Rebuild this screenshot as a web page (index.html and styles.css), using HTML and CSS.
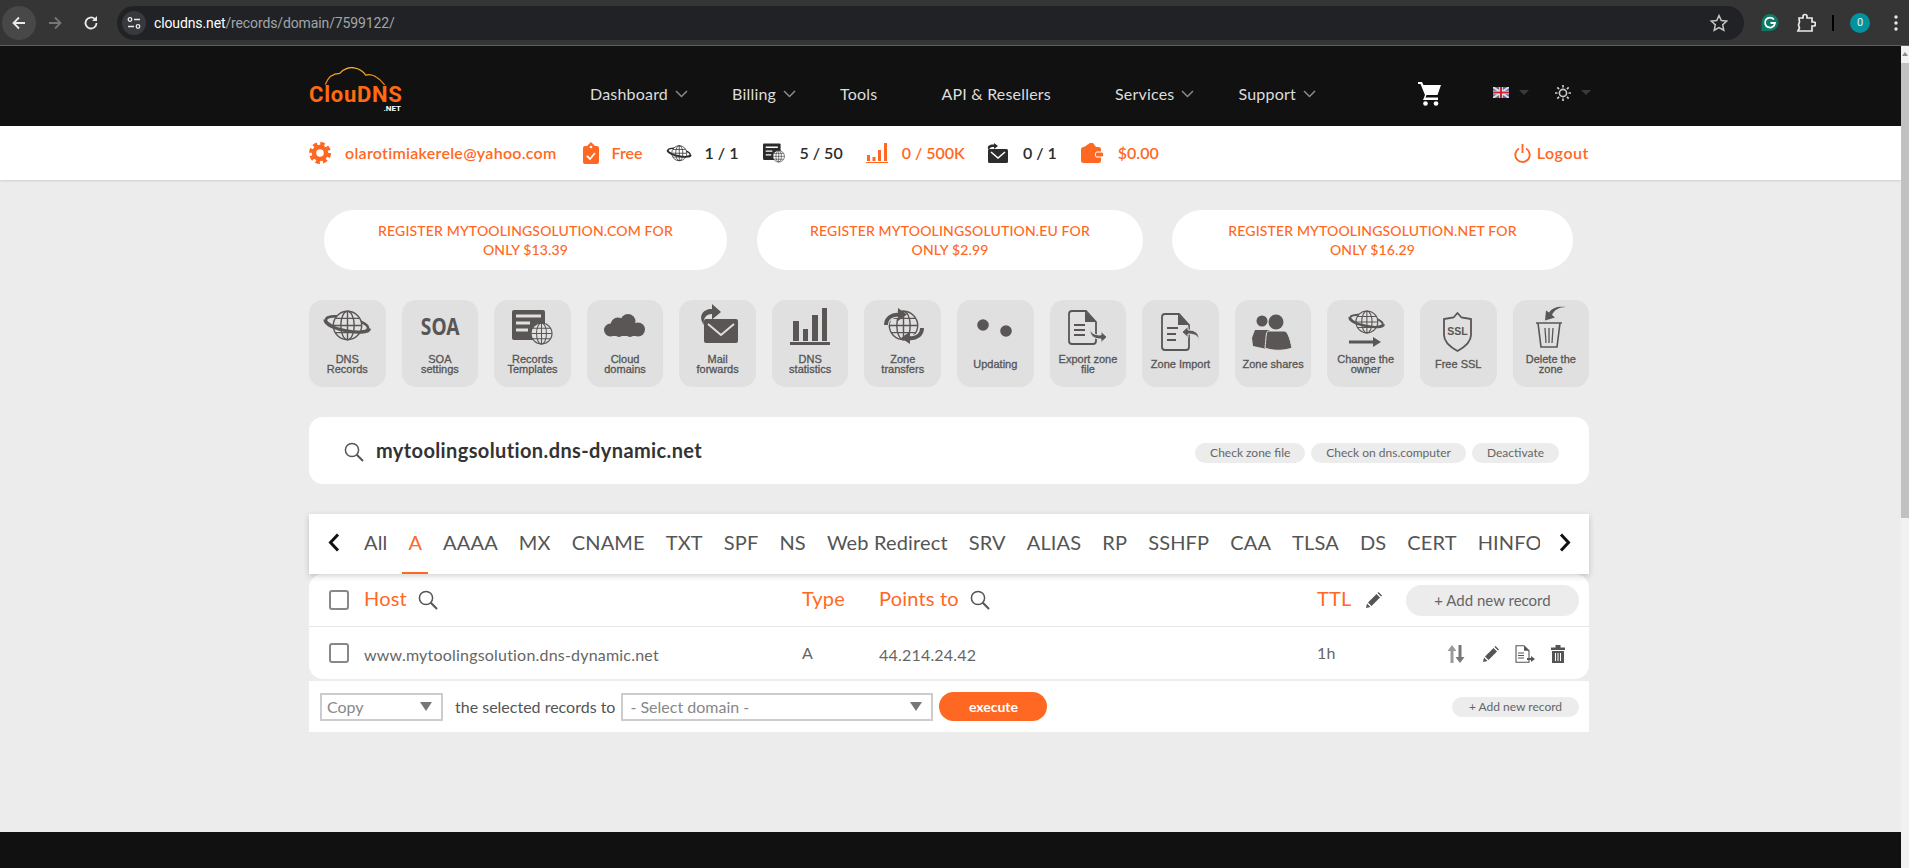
FILE: index.html
```html
<!DOCTYPE html>
<html lang="en">
<head>
<meta charset="utf-8">
<title>ClouDNS records</title>
<link rel="stylesheet" href="styles.css">
</head>
<body>
<svg class="sprite" width="0" height="0" aria-hidden="true">
  <defs>
    <symbol id="globe" viewBox="0 0 24 24">
      <g fill="none" stroke="currentColor" stroke-width="1.1">
        <circle cx="12" cy="12" r="11" class="globe-fill"/>
        <ellipse cx="12" cy="12" rx="5.2" ry="11"/>
        <path d="M12 1v22M1 12h22M3 6.5h18M3 17.5h18"/>
      </g>
    </symbol>
    <symbol id="planet" viewBox="0 0 48 32">
      <g fill="none" stroke="currentColor">
        <ellipse cx="24" cy="14" rx="21.5" ry="6.5" stroke-width="2.6" transform="rotate(12 24 14)"/>
      </g>
      <use href="#globe" x="9" y="0" width="31" height="31"/>
      <path d="M2 9.5C2 14 10 18 22 20.5C34 23 46 23 46.5 18.5" fill="none" stroke="currentColor" stroke-width="3.2"/>
    </symbol>
    <symbol id="magnifier" viewBox="0 0 20 20">
      <circle cx="8" cy="8" r="6.6" fill="none" stroke="currentColor" stroke-width="1.5"/>
      <path d="M12.8 12.8L19 19" stroke="currentColor" stroke-width="2" fill="none"/>
    </symbol>
    <symbol id="pencil" viewBox="0 0 16 16">
      <path d="M0 16l1-4.500 3.500 3.500zM2 10.500L10.500 2 14 5.500 5.500 14zM11.500 1l1-1 3.500 3.500-1 1z" fill="currentColor"/>
    </symbol>
  </defs>
</svg>

<div class="chrome">
  <div class="nav-btn nav-btn-active">
    <svg width="16" height="16" viewBox="0 0 16 16"><path d="M14 8H3M8 2.500L2.500 8 8 13.500" fill="none" stroke="#e8eaed" stroke-width="1.800"/></svg>
  </div>
  <div class="nav-btn">
    <svg width="16" height="16" viewBox="0 0 16 16"><path d="M2 8h11M8 2.500L13.500 8 8 13.500" fill="none" stroke="#75777a" stroke-width="1.800"/></svg>
  </div>
  <div class="nav-btn">
    <svg width="16" height="16" viewBox="0 0 16 16"><path d="M13.500 8A5.500 5.500 0 1 1 11.800 4" fill="none" stroke="#e8eaed" stroke-width="1.800"/><path d="M14 1v5H9z" fill="#e8eaed"/></svg>
  </div>
  <div class="address">
    <div class="site-btn">
      <svg width="14" height="14" viewBox="0 0 14 14"><g fill="none" stroke="#e8eaed" stroke-width="1.300"><circle cx="3" cy="3.500" r="1.800"/><path d="M7 3.500h6M1 10.500h6"/><circle cx="11" cy="10.500" r="1.800"/></g></svg>
    </div>
    <div class="url"><span class="url-host">cloudns.net</span>/records/domain/7599122/</div>
    <svg class="star" width="20" height="20" viewBox="0 0 20 20"><path d="M10 2.500l2.300 5 5.400.6-4 3.700 1.100 5.400L10 14.500l-4.800 2.700 1.100-5.400-4-3.700 5.400-.6z" fill="none" stroke="#c4c7c5" stroke-width="1.500"/></svg>
  </div>
  <div class="ext-icons">
    <svg width="20" height="20" viewBox="0 0 20 20"><path d="M10 1a8.500 8.500 0 0 1 8.500 8.500A8.500 8.500 0 0 1 10 18H1.500V9.500A8.500 8.500 0 0 1 10 1z" fill="#0c7a66"/><path d="M14 6.500A5 5 0 1 0 15 10h-4.500" fill="none" stroke="#fff" stroke-width="1.800"/></svg>
    <svg width="20" height="20" viewBox="0 0 20 20"><path d="M3 5h4V3.500a2 2 0 0 1 4 0V5h5v4h1.500a2 2 0 0 1 0 4H16v5H2l1.500-3-1-3 1-3z" fill="none" stroke="#e8eaed" stroke-width="1.700"/></svg>
    <div class="ext-divider"></div>
    <div class="avatar">0</div>
    <svg width="20" height="20" viewBox="0 0 20 20"><g fill="#e8eaed"><circle cx="10" cy="4" r="1.700"/><circle cx="10" cy="10" r="1.700"/><circle cx="10" cy="16" r="1.700"/></g></svg>
  </div>
</div>

<div class="viewport">
  <div class="page">
    <header class="header">
      <div class="logo">
        <svg width="92" height="18" viewBox="0 0 92 20"><defs><linearGradient id="arc" x1="0" y1="1" x2="0" y2="0"><stop offset="0" stop-color="#e8791a"/><stop offset="1" stop-color="#f6b52c"/></linearGradient></defs><path d="M13 19.500C16 11 22 7 29 7C33 2 40 0 45 1C51 2 55 5 58 9C64 7 72 11 79 20" fill="none" stroke="url(#arc)" stroke-width="1.500"/></svg>
        <div class="logo-name">ClouDNS</div>
        <div class="logo-tld">.NET</div>
      </div>
      <div class="header-main">
        <nav class="menu">
          <a class="menu-item">Dashboard<svg class="chev" width="13" height="8" viewBox="0 0 13 8"><path d="M1 1l5.500 5.500L12 1" fill="none" stroke="#8a8a8a" stroke-width="1.500"/></svg></a>
          <a class="menu-item">Billing<svg class="chev" width="13" height="8" viewBox="0 0 13 8"><path d="M1 1l5.500 5.500L12 1" fill="none" stroke="#8a8a8a" stroke-width="1.500"/></svg></a>
          <a class="menu-item">Tools</a>
          <a class="menu-item menu-item-api">API &amp; Resellers</a>
          <a class="menu-item">Services<svg class="chev" width="13" height="8" viewBox="0 0 13 8"><path d="M1 1l5.500 5.500L12 1" fill="none" stroke="#8a8a8a" stroke-width="1.500"/></svg></a>
          <a class="menu-item">Support<svg class="chev" width="13" height="8" viewBox="0 0 13 8"><path d="M1 1l5.500 5.500L12 1" fill="none" stroke="#8a8a8a" stroke-width="1.500"/></svg></a>
        </nav>
        <svg class="cart" width="23" height="24" viewBox="0 0 23 24"><path d="M0 0h4l1.500 3H23l-3.500 10H8.500l-1 2.500H20v2.500H5l2-5L2.500 2H0z" fill="#fff"/><circle cx="7.500" cy="21.500" r="2.300" fill="#fff"/><circle cx="18" cy="21.500" r="2.300" fill="#fff"/></svg>
        <div class="lang">
          <svg width="16" height="11" viewBox="0 0 16 11"><rect width="16" height="11" fill="#5a64a8"/><path d="M0 0l16 11M16 0L0 11" stroke="#ddd" stroke-width="2"/><path d="M8 0v11M0 5.500h16" stroke="#eee" stroke-width="3.500"/><path d="M8 0v11M0 5.500h16" stroke="#d2232a" stroke-width="2"/></svg>
          <i class="hdr-caret"></i>
        </div>
        <div class="theme">
          <svg width="16" height="16" viewBox="0 0 16 16"><circle cx="8" cy="8" r="3.600" fill="none" stroke="#ccc" stroke-width="1.600"/><path d="M8 0v2.500M8 13.500V16M0 8h2.500M13.500 8H16M2.300 2.300l1.800 1.800M11.900 11.900l1.800 1.800M13.700 2.300l-1.800 1.800M4.100 11.900l-1.800 1.800" stroke="#ccc" stroke-width="1.700"/></svg>
          <i class="hdr-caret"></i>
        </div>
      </div>
    </header>

    <div class="userbar">
      <div class="stat stat-email orange">
        <svg width="22" height="22" viewBox="0 0 22 22"><circle cx="11" cy="11" r="6" fill="none" stroke="currentColor" stroke-width="4.500"/><circle cx="11" cy="11" r="9.300" fill="none" stroke="currentColor" stroke-width="3.400" stroke-dasharray="4.300 3"/></svg>
        <span>olarotimiakerele@yahoo.com</span>
      </div>
      <div class="stat stat-plan orange">
        <svg width="16" height="22" viewBox="0 0 16 22"><path d="M8 0l4 4h2a2 2 0 0 1 2 2v14a2 2 0 0 1-2 2H2a2 2 0 0 1-2-2V6a2 2 0 0 1 2-2h2z" fill="currentColor"/><circle cx="8" cy="5" r="1.300" fill="#fff"/><path d="M4 14l3 3 5-6" fill="none" stroke="#fff" stroke-width="1.800"/></svg>
        <span>Free</span>
      </div>
      <div class="stat stat-zones dark">
        <svg class="stat-planet" width="26" height="17" viewBox="0 0 48 32"><use href="#planet"/></svg>
        <span>1 / 1</span>
      </div>
      <div class="stat stat-records dark">
        <svg class="stat-planet" width="22" height="20" viewBox="0 0 40 35"><rect width="32" height="30" rx="2" fill="currentColor"/><path d="M5 7h22M5 14h12M5 21h10" stroke="#fff" stroke-width="2.500"/><use href="#globe" x="17" y="12" width="23" height="23"/></svg>
        <span>5 / 50</span>
      </div>
      <div class="stat stat-hits orange">
        <svg width="22" height="20" viewBox="0 0 22 20"><path d="M1 12h3v6H1zM6.500 14h3v4h-3zM12 7h3v11h-3zM18 0h3v18h-3zM0 19h22v1.500H0z" fill="currentColor"/></svg>
        <span>0 / 500K</span>
      </div>
      <div class="stat stat-mail dark">
        <svg width="22" height="20" viewBox="0 0 22 20"><rect x="2" y="6" width="20" height="14" rx="1.500" fill="currentColor"/><path d="M5 9l7 6 7-6" fill="none" stroke="#fff" stroke-width="1.500"/><path d="M3 7C0 4 3 1 8 1.500V0l4 3-4 3V4C5 3.500 3 5 3 7z" fill="currentColor"/></svg>
        <span>0 / 1</span>
      </div>
      <div class="stat stat-wallet orange">
        <svg width="23" height="20" viewBox="0 0 23 20"><path d="M3 4L9 0h3l3 4z" fill="currentColor"/><rect y="4" width="20" height="16" rx="2.500" fill="currentColor"/><rect x="14.500" y="9" width="8" height="5" rx="1.500" fill="currentColor" stroke="#fff" stroke-width="1"/></svg>
        <span>$0.00</span>
      </div>
      <div class="stat stat-logout orange">
        <svg width="17" height="19" viewBox="0 0 17 19"><path d="M5 4.500a7.200 7.200 0 1 0 7 0M8.500 0v9" fill="none" stroke="currentColor" stroke-width="1.900"/></svg>
        <span>Logout</span>
      </div>
    </div>

    <main class="main">
      <section class="promos">
        <a class="promo promo-com">REGISTER MYTOOLINGSOLUTION.COM FOR<br>ONLY $13.39</a>
        <a class="promo promo-eu">REGISTER MYTOOLINGSOLUTION.EU FOR<br>ONLY $2.99</a>
        <a class="promo promo-net">REGISTER MYTOOLINGSOLUTION.NET FOR<br>ONLY $16.29</a>
      </section>

      <section class="tiles">
        <a class="tile">
          <svg class="tile-icon" viewBox="0 0 76 52"><use href="#planet" x="14" y="6" width="48" height="32"/></svg>
          <span class="tile-label">DNS<br>Records</span>
        </a>
        <a class="tile">
          <div class="tile-icon soa"><span>SOA</span></div>
          <span class="tile-label">SOA<br>settings</span>
        </a>
        <a class="tile">
          <svg class="tile-icon" viewBox="0 0 76 52"><rect x="18" y="6" width="33" height="30" rx="2" fill="currentColor"/><path d="M22 12h25M22 19h14M22 26h12" stroke="#e0e0e0" stroke-width="3"/><use href="#globe" x="36" y="18" width="23" height="23"/></svg>
          <span class="tile-label">Records<br>Templates</span>
        </a>
        <a class="tile">
          <svg class="tile-icon" viewBox="0 0 76 52"><g fill="currentColor"><circle cx="23.500" cy="26" r="6.500"/><circle cx="31" cy="21" r="7.500"/><circle cx="41" cy="17.500" r="7.500"/><circle cx="51" cy="25.500" r="7"/><circle cx="32" cy="28" r="5"/><circle cx="43" cy="28" r="5"/><rect x="23" y="22" width="29" height="10"/></g></svg>
          <span class="tile-label">Cloud<br>domains</span>
        </a>
        <a class="tile">
          <svg class="tile-icon" viewBox="0 0 76 52"><rect x="24" y="15" width="34" height="24" rx="2" fill="currentColor"/><path d="M28 20l13 11 13-11" fill="none" stroke="#e0e0e0" stroke-width="2"/><path d="M24 21C18 13 22 5 32 5V0l9 8-9 7.500V10C26 10 23 14 24 21z" fill="currentColor"/></svg>
          <span class="tile-label">Mail<br>forwards</span>
        </a>
        <a class="tile">
          <svg class="tile-icon" viewBox="0 0 76 52"><path d="M21 17h6v20h-6zM31 25h5v12h-5zM40 11h6v26h-6zM50 4h5v33h-5zM18 38h40v3H18z" fill="currentColor"/></svg>
          <span class="tile-label">DNS<br>statistics</span>
        </a>
        <a class="tile">
          <svg class="tile-icon" viewBox="0 0 76 52"><use href="#globe" x="23" y="6" width="31" height="31"/><path d="M21 21C21 14 27 10 34 11" fill="none" stroke="#e0e0e0" stroke-width="6"/><path d="M21 21C21 14 27 10 34 11" fill="none" stroke="currentColor" stroke-width="4"/><path d="M33 4l9 6.500-9 6.500z" fill="currentColor"/><path d="M57 24C57 31 51 35 44 34" fill="none" stroke="#e0e0e0" stroke-width="6"/><path d="M57 24C57 31 51 35 44 34" fill="none" stroke="currentColor" stroke-width="4"/><path d="M45 27.500l-9 6.500 9 6z" fill="currentColor"/></svg>
          <span class="tile-label">Zone<br>transfers</span>
        </a>
        <a class="tile">
          <svg class="tile-icon" viewBox="0 0 76 52"><circle cx="26" cy="21" r="5.800" fill="currentColor"/><circle cx="49" cy="27" r="5.800" fill="currentColor"/></svg>
          <span class="tile-label">Updating</span>
        </a>
        <a class="tile">
          <svg class="tile-icon" viewBox="0 0 76 52"><path d="M22 7h14l10 11v19a3 3 0 0 1-3 3H22a3 3 0 0 1-3-3V10a3 3 0 0 1 3-3z" fill="none" stroke="currentColor" stroke-width="1.800"/><path d="M35 7l11 11H35z" fill="currentColor"/><path d="M24 21h11M24 26h11M24 31h11" stroke="currentColor" stroke-width="1.800"/><path d="M40 23c0 6 4 8 11 8v-3.500l6 5.500-6 5.500V35C44 35 39 32 40 23z" fill="currentColor" stroke="#e0e0e0" stroke-width="1"/></svg>
          <span class="tile-label">Export zone<br>file</span>
        </a>
        <a class="tile">
          <svg class="tile-icon" viewBox="0 0 76 52"><path d="M23 10h14l10 11v22a3 3 0 0 1-3 3H23a3 3 0 0 1-3-3V13a3 3 0 0 1 3-3z" fill="none" stroke="currentColor" stroke-width="1.800"/><path d="M36 10l11 11H36z" fill="currentColor"/><path d="M25 24h11M25 30h9M25 36h9" stroke="currentColor" stroke-width="1.800"/><path d="M57 38c0-6-4-8-11-8v3.500L40 28l6-5.500V26C53 26 58 29 57 38z" fill="currentColor" stroke="#e0e0e0" stroke-width="1"/></svg>
          <span class="tile-label">Zone Import</span>
        </a>
        <a class="tile">
          <svg class="tile-icon" viewBox="0 0 76 52"><g fill="currentColor"><circle cx="27" cy="17" r="5.500"/><path d="M20 26h14l3 5-5 14-14-3-1-8z"/><circle cx="41" cy="18" r="7.500"/><path d="M33 27h16c4 0 6 8 8 17-8 3-20 3-27 0 1-9 1-17 3-17z" stroke="#e0e0e0" stroke-width="1"/></g></svg>
          <span class="tile-label">Zone shares</span>
        </a>
        <a class="tile">
          <svg class="tile-icon" viewBox="0 0 76 52"><use href="#planet" x="20" y="6" width="37" height="24.700"/><path d="M21 36.500h24V33l8 5-8 5v-3.500H21z" fill="currentColor"/></svg>
          <span class="tile-label">Change the<br>owner</span>
        </a>
        <a class="tile">
          <svg class="tile-icon" viewBox="0 0 76 52"><path d="M37.500 9l4 4.500 9.500 1.500v16c0 8-8 13-13.500 16C32 44 24 39 24 31V15l9.500-1.500z" fill="none" stroke="currentColor" stroke-width="1.800"/><text x="37.500" y="31" class="ssl-text">SSL</text></svg>
          <span class="tile-label">Free SSL</span>
        </a>
        <a class="tile">
          <svg class="tile-icon" viewBox="0 0 76 52"><path d="M23 19h26M25 19l3 24h16l3-24" fill="none" stroke="currentColor" stroke-width="1.600"/><path d="M32 24l1 15M36 24v15M40 24l-1 15" stroke="currentColor" stroke-width="1.300"/><path d="M53 3C46 3 41 6 39 11l3 2.500-10 3 1-10 3 2C39 4 45 2 53 3z" fill="currentColor"/></svg>
          <span class="tile-label">Delete the<br>zone</span>
        </a>
      </section>

      <section class="zone-bar">
        <div class="zone-name">
          <svg width="20" height="20"><use href="#magnifier"/></svg>
          <strong>mytoolingsolution.dns-dynamic.net</strong>
        </div>
        <div class="zone-actions">
          <a class="chip">Check zone file</a>
          <a class="chip">Check on dns.computer</a>
          <a class="chip">Deactivate</a>
        </div>
      </section>

      <section class="tabs">
        <svg class="tab-arrow" width="12" height="19" viewBox="0 0 12 19"><path d="M10 1.500L2.500 9.500l7.500 8" fill="none" stroke="#111" stroke-width="3"/></svg>
        <div class="tab-list">
          <a class="tab">All</a><a class="tab tab-active">A</a><a class="tab">AAAA</a><a class="tab">MX</a><a class="tab">CNAME</a><a class="tab">TXT</a><a class="tab">SPF</a><a class="tab">NS</a><a class="tab">Web Redirect</a><a class="tab">SRV</a><a class="tab">ALIAS</a><a class="tab">RP</a><a class="tab">SSHFP</a><a class="tab">CAA</a><a class="tab">TLSA</a><a class="tab">DS</a><a class="tab">CERT</a><a class="tab">HINFO</a>
        </div>
        <svg class="tab-arrow" width="12" height="19" viewBox="0 0 12 19"><path d="M2 1.500l7.500 8-7.500 8" fill="none" stroke="#111" stroke-width="3"/></svg>
      </section>

      <section class="records">
        <div class="rec-row rec-head">
          <span class="check"></span>
          <div class="rec-cell"><span class="col-title">Host</span><svg class="mag" width="20" height="20"><use href="#magnifier"/></svg></div>
          <div class="rec-cell"><span class="col-title">Type</span></div>
          <div class="rec-cell"><span class="col-title">Points to</span><svg class="mag" width="20" height="20"><use href="#magnifier"/></svg></div>
          <div class="rec-cell rec-ttl">
            <span class="col-title">TTL</span><svg class="pen" width="16" height="16"><use href="#pencil"/></svg>
            <a class="add-btn">+ Add new record</a>
          </div>
        </div>
        <div class="rec-row rec-body">
          <span class="check"></span>
          <div class="rec-cell">www.mytoolingsolution.dns-dynamic.net</div>
          <div class="rec-cell rec-raised">A</div>
          <div class="rec-cell">44.214.24.42</div>
          <div class="rec-cell rec-ttl">
            <span class="rec-raised">1h</span>
            <div class="row-icons">
              <svg class="icon-sort" width="18" height="18" viewBox="0 0 18 18"><path d="M5 0l4.500 6H6.500v12h-3V6H.5z" fill="#9a9a9a"/><path d="M13 18l-4.500-6h3V0h3v12h3z" fill="#777"/></svg>
              <svg width="16" height="16"><use href="#pencil"/></svg>
              <svg width="20" height="18" viewBox="0 0 20 18"><path d="M1 .8h8l5 5v11.400H1z" fill="none" stroke="currentColor" stroke-width="1.100"/><path d="M9 .8l5 5H9z" fill="currentColor"/><path d="M3 8h6M3 10.500h6M3 13h6" stroke="currentColor" stroke-width="1"/><path d="M12 13h4v-2l4 3-4 3v-2h-4z" fill="currentColor"/></svg>
              <svg width="14" height="18" viewBox="0 0 14 18"><path d="M0 2.500h4.500V0h5v2.500H14V5H0zM1 6h12v12H1z" fill="currentColor"/><path d="M4.500 8v8M7 8v8M9.500 8v8" stroke="#fff" stroke-width="1"/></svg>
            </div>
          </div>
        </div>
      </section>

      <section class="bulk">
        <div class="select select-copy"><span>Copy</span><i class="caret"></i></div>
        <span class="bulk-text">the selected records to</span>
        <div class="select select-domain"><span>- Select domain -</span><i class="caret"></i></div>
        <a class="execute">execute</a>
        <a class="add-btn add-btn-small">+ Add new record</a>
      </section>
    </main>

    <footer class="footer"></footer>
  </div>
  <div class="scrollbar">
    <i class="scroll-up"></i>
    <div class="scroll-thumb"></div>
  </div>
</div>
</body>
</html>
```
FILE: styles.css
```css
* { box-sizing: border-box; }
html, body { margin: 0; height: 100%; overflow: hidden; }
body {
  font-family: "Lato", "Noto Sans", sans-serif;
  background: #ececec;
  color: #555;
  display: flex;
  flex-direction: column;
}
a { color: inherit; text-decoration: none; }
.sprite { display: block; height: 0; }
.globe-fill { fill: var(--globe-bg, none); }

/* browser chrome */
.chrome {
  height: 46px;
  flex: none;
  background: #353535;
  border-bottom: 1px solid #5f5f5f;
  display: flex;
  align-items: center;
  padding-left: 2px;
}
.nav-btn {
  width: 34px;
  height: 34px;
  margin-right: 2px;
  border-radius: 50%;
  display: flex;
  align-items: center;
  justify-content: center;
}
.nav-btn-active { background: #484848; }
.address {
  margin-left: 7px;
  width: 1627px;
  height: 34px;
  background: #202226;
  border-radius: 17px;
  display: flex;
  align-items: center;
  padding: 0 15px 0 5px;
}
.site-btn {
  width: 24px;
  height: 24px;
  border-radius: 50%;
  background: #37393d;
  display: flex;
  align-items: center;
  justify-content: center;
}
.url {
  margin-left: 8px;
  font: 14px "Roboto", sans-serif;
  letter-spacing: -.12px;
  color: #a3a5a8;
  flex: 1;
}
.url-host { color: #fff; }
.ext-icons {
  margin-left: 16px;
  display: flex;
  align-items: center;
  gap: 16px;
}
.ext-divider { width: 2px; height: 16px; background: #000; }
.avatar {
  width: 20px;
  height: 20px;
  border-radius: 50%;
  background: #00939e;
  color: #e8f4f5;
  font: 11px/20px "Roboto", sans-serif;
  text-align: center;
}

/* layout */
.viewport { flex: 1; display: flex; min-height: 0; }
.page { flex: 1; display: flex; flex-direction: column; min-width: 0; }

/* header */
.header {
  height: 80px;
  flex: none;
  background: #111;
  padding: 8px 0 0 309px;
  display: flex;
  align-items: center;
  color: #ddd;
}
.logo { width: 92px; display: flex; flex-direction: column; }
.logo svg { display: block; }
.logo-name {
  font: 700 22px/19px "Roboto", sans-serif;
  letter-spacing: .75px;
  color: #ff6a13;
  white-space: nowrap;
}
.logo-tld {
  font: 700 8px/9px "Roboto", sans-serif;
  color: #fff;
  text-align: right;
}
.header-main { display: flex; align-items: center; margin-top: 8px; margin-left: 189px; }
.menu { display: flex; align-items: center; gap: 44px; font-size: 16px; margin-top: -2px; }
.menu-item { display: flex; align-items: center; gap: 7px; white-space: nowrap; letter-spacing: .2px; }
.menu-item-api { margin: 0 20px; }
.chev { display: block; margin-top: 2px; }
.cart { margin-left: 102px; }
.lang { margin-left: 52px; display: flex; align-items: center; gap: 10px; margin-top: -4px; }
.theme { margin-left: 26px; display: flex; align-items: center; gap: 10px; margin-top: -3px; }
.hdr-caret {
  display: block;
  width: 0;
  height: 0;
  border: 5px solid transparent;
  border-top: 5px solid #3a3a3a;
  border-bottom: 0;
}

/* user bar */
.userbar {
  height: 54px;
  flex: none;
  background: #fff;
  box-shadow: 0 1px 2px rgba(0,0,0,.12);
  position: relative;
  padding: 0 312px 0 309px;
  display: flex;
  align-items: center;
  font-size: 16px;
  font-weight: 600;
}
.stat { display: flex; align-items: center; white-space: nowrap; }
.stat span { margin-top: -2px; }
.orange { color: #ff6822; }
.dark { color: #2c2c2c; }
.stat-email { gap: 14px; }
.stat-email span { letter-spacing: .28px; }
.stat-plan { margin-left: 26px; gap: 13px; }
.stat-zones { margin-left: 23px; gap: 13px; }
.stat-records { margin-left: 24px; gap: 15px; }
.stat-hits { margin-left: 23px; gap: 14px; }
.stat-mail { margin-left: 21px; gap: 15px; }
.stat-wallet { margin-left: 24px; gap: 14px; }
.stat-logout { margin-left: auto; gap: 6px; }
.stat-logout span { letter-spacing: .55px; }
.stat-planet { --globe-bg: #fff; }

/* main */
.main { flex: 1; width: 1280px; margin-left: 309px; padding-top: 30px; }
.promos { display: flex; padding-left: 15px; }
.promo {
  height: 60px;
  background: #fff;
  border-radius: 30px;
  color: #ff6822;
  font-size: 14px;
  line-height: 19px;
  font-weight: 500;
  letter-spacing: .15px;
  text-align: center;
  display: flex;
  align-items: center;
  justify-content: center;
}
.promo-com { width: 403px; }
.promo-eu { width: 386px; margin-left: 30px; }
.promo-net { width: 401px; margin-left: 29px; }

.tiles { display: flex; gap: 16px; margin-top: 30px; }
.tile {
  flex: 1;
  height: 87px;
  background: #e0e0e0;
  border-radius: 14px;
  color: #5a5655;
  padding-top: 4px;
  display: flex;
  flex-direction: column;
  align-items: center;
  --globe-bg: #e0e0e0;
}
.tile-icon { display: block; width: 76px; height: 52px; flex: none; }
.soa {
  display: flex;
  align-items: flex-start;
  justify-content: center;
  padding-top: 10px;
  font: 700 24px/24px "Noto Sans", sans-serif;
}
.soa span { display: block; transform: scaleX(.8); }
.tile-label {
  height: 22px;
  margin-top: -3px;
  display: flex;
  align-items: center;
  text-align: center;
  font: 11px/10.5px "Liberation Sans", sans-serif;
  color: #555;
  -webkit-text-stroke: .3px #555;
}
.ssl-text {
  font: 700 10.5px "Liberation Sans", sans-serif;
  fill: currentColor;
  text-anchor: middle;
}

.zone-bar {
  height: 67px;
  margin-top: 30px;
  background: #fff;
  border-radius: 14px;
  padding: 0 30px 0 35px;
  display: flex;
  align-items: center;
  justify-content: space-between;
}
.zone-name { display: flex; align-items: center; gap: 12px; }
.zone-name svg { color: #555; margin-top: 2px; }
.zone-name strong { font-size: 20px; font-weight: 700; color: #333; margin-top: -2px; letter-spacing: .38px; }
.zone-actions { display: flex; gap: 6px; margin-top: 5px; }
.chip {
  height: 20px;
  padding: 0 15px;
  background: #ececec;
  border-radius: 10px;
  font-size: 12px;
  line-height: 20px;
  color: #666;
}

.tabs {
  height: 60px;
  margin-top: 30px;
  background: #fff;
  box-shadow: 0 2px 6px rgba(0,0,0,.18);
  position: relative;
  display: flex;
  align-items: center;
  padding: 0 18px 4px 19px;
}
.tab-list {
  margin-left: 24px;
  width: 1176px;
  height: 60px;
  overflow: hidden;
  display: flex;
  gap: 21px;
  margin-bottom: -4px;
  flex: none;
}
.tab-arrow { flex: none; }
.tab-arrow:last-child { margin-left: 19px; }
.tab {
  height: 60px;
  line-height: 56px;
  font-size: 20px;
  color: #555;
  white-space: nowrap;
  letter-spacing: .15px;
  flex: none;
  position: relative;
}
.tab-active { color: #ff6822; }
.tab-active::after {
  content: "";
  position: absolute;
  left: -6px;
  right: -6px;
  bottom: 0;
  height: 2px;
  background: #ff6822;
}

.records { background: #fff; border-radius: 14px; }
.rec-row {
  display: grid;
  grid-template-columns: 35px 438px 77px 438px 1fr;
  padding-left: 20px;
  align-items: center;
}
.rec-head { height: 53px; border-bottom: 1px solid #e6e6e6; }
.rec-body { height: 52px; padding-top: 2px; font-size: 16px; color: #666; letter-spacing: .2px; }
.rec-body .check { margin-top: -2px; }
.check {
  width: 20px;
  height: 20px;
  border: 2px solid #888;
  border-radius: 3px;
  display: block;
}
.rec-cell { display: flex; align-items: center; white-space: nowrap; }
.rec-raised { position: relative; top: -2px; }
.col-title { font-size: 20px; color: #ff6822; letter-spacing: .2px; margin-top: -4px; }
.mag { color: #555; margin-left: 11px; }
.pen { color: #555; margin-left: 14px; }
.rec-ttl { padding-right: 10px; }
.add-btn {
  margin-left: auto;
  width: 173px;
  height: 31px;
  background: #ececec;
  border-radius: 16px;
  color: #666;
  font-size: 15px;
  line-height: 31px;
  text-align: center;
}
.row-icons { margin-left: auto; display: flex; align-items: center; gap: 16px; color: #555; padding-right: 14px; }
.icon-sort { margin-right: 2px; }

.bulk {
  height: 51px;
  margin-top: 2px;
  background: #fff;
  padding: 0 10px 0 11px;
  display: flex;
  align-items: center;
  font-size: 16px;
  color: #555;
}
.select {
  height: 28px;
  border: 2px solid #ccc;
  background: #fff;
  color: #888;
  font-size: 16px;
  display: flex;
  align-items: center;
  justify-content: space-between;
  padding: 0 9px 0 5px;
}
.select-copy { width: 123px; }
.select-domain { width: 312px; margin-left: 6px; padding-left: 7px; }
.bulk-text { margin-left: 12px; white-space: nowrap; }
.caret {
  width: 0;
  height: 0;
  border: 6px solid transparent;
  border-top: 9px solid #777;
  border-bottom: 0;
}
.execute {
  margin-left: 6px;
  width: 108px;
  height: 29px;
  background: #ff6822;
  border-radius: 15px;
  color: #fff;
  font-size: 14px;
  line-height: 29px;
  text-align: center;
  font-weight: 700;
}
.add-btn-small { width: 127px; height: 20px; line-height: 20px; font-size: 12px; border-radius: 10px; }

.footer { height: 36px; flex: none; background: #111; }

.scrollbar { width: 8px; flex: none; background: #f1f1f1; padding-top: 17px; position: relative; }
.scroll-up {
  position: absolute;
  top: 6px;
  left: 1px;
  width: 0;
  height: 0;
  border: 3px solid transparent;
  border-bottom: 4px solid #8a8a8a;
  border-top: 0;
}
.scroll-thumb { height: 455px; background: #c1c1c1; }
```
